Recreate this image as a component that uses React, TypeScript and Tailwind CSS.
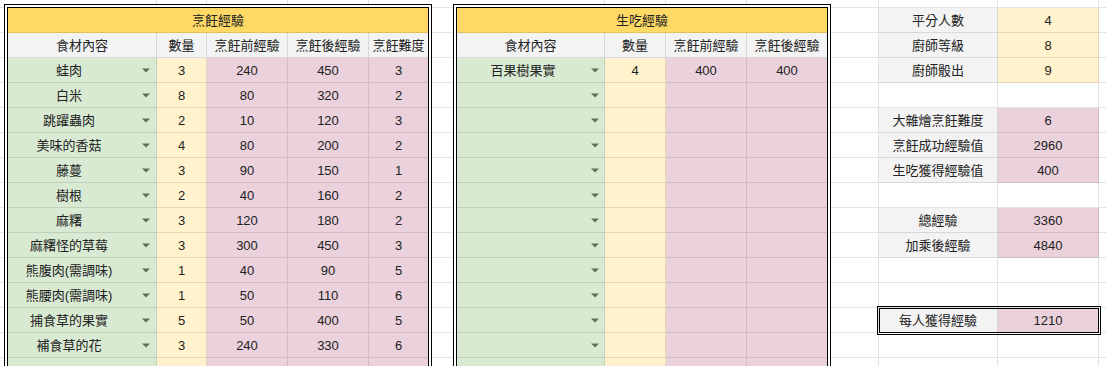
import React from "react";

const LINE = "border-black/[0.11]";

const GREEN = "bg-[#d9ead3]";
const YELLOW = "bg-[#fff2cc]";
const PINK = "bg-[#ead1dc]";
const HEAD = "bg-[#f3f3f3]";

const T1W = ["w-[149px]", "w-[50px]", "w-[81px]", "w-[81px]", "w-[59px]"];
const T1BG = [GREEN, YELLOW, PINK, PINK, PINK];
const T2W = ["w-[148px]", "w-[61px]", "w-[81px]", "w-[80px]"];
const T2BG = [GREEN, YELLOW, PINK, PINK];

const data1: string[][] = [
  ["蛙肉", "3", "240", "450", "3"],
  ["白米", "8", "80", "320", "2"],
  ["跳躍蟲肉", "2", "10", "120", "3"],
  ["美味的香菇", "4", "80", "200", "2"],
  ["藤蔓", "3", "90", "150", "1"],
  ["樹根", "2", "40", "160", "2"],
  ["麻糬", "3", "120", "180", "2"],
  ["麻糬怪的草莓", "3", "300", "450", "3"],
  ["熊腹肉(需調味)", "1", "40", "90", "5"],
  ["熊腰肉(需調味)", "1", "50", "110", "6"],
  ["捕食草的果實", "5", "50", "400", "5"],
  ["補食草的花", "3", "240", "330", "6"],
  ["", "", "", "", ""],
];

const data2: string[][] = [
  ["百果樹果實", "4", "400", "400"],
  ...Array.from({ length: 12 }, () => ["", "", "", ""]),
];

function Arrow() {
  return (
    <svg width="8" height="5" viewBox="0 0 8 5" className="shrink-0">
      <path d="M0 0.5h8L4 4.5z" fill="#58744f" />
    </svg>
  );
}

function TopStrip({ widths }: { widths: string[] }) {
  return (
    <div className="flex h-[4px] shrink-0 pl-[4px]">
      {widths.map((w, i) => (
        <div
          key={i}
          className={`${i < widths.length - 1 ? w + " border-r" : "flex-1"} ${LINE}`}
        />
      ))}
    </div>
  );
}

function Table({
  title,
  headers,
  widths,
  bgs,
  rows,
  boxW,
  textPad,
  arrowMr,
}: {
  title: string;
  headers: string[];
  widths: string[];
  bgs: string[];
  rows: string[][];
  boxW: string;
  textPad: string;
  arrowMr: string;
}) {
  const last = widths.length - 1;
  return (
    <div className={`${boxW} shrink-0 flex flex-col`}>
      <TopStrip widths={widths} />
      <div className="flex flex-col border-4 border-double border-black border-b-0 flex-1">
        <div className={`h-[25px] shrink-0 bg-[#ffd966] border-b ${LINE} flex items-center justify-center leading-[15px]`}>
          {title}
        </div>
        <div className="flex h-[25px] shrink-0">
          {headers.map((h, i) => (
            <div
              key={i}
              className={`${widths[i]} ${HEAD} border-b ${i < last ? "border-r" : ""} ${LINE} flex items-center justify-center leading-[15px]`}
            >
              {h}
            </div>
          ))}
        </div>
        {rows.map((r, ri) => (
          <div key={ri} className="flex h-[25px] shrink-0">
            {r.map((v, i) =>
              i === 0 ? (
                <div
                  key={i}
                  className={`${widths[i]} ${bgs[i]} border-b border-r ${LINE} flex items-center leading-[15px]`}
                >
                  <span className={`flex-1 text-center whitespace-nowrap ${textPad}`}>{v}</span>
                  <span className={arrowMr}>
                    <Arrow />
                  </span>
                </div>
              ) : (
                <div
                  key={i}
                  className={`${widths[i]} ${bgs[i]} border-b ${i < last ? "border-r" : ""} ${LINE} flex items-center justify-center leading-[15px]`}
                >
                  {v}
                </div>
              )
            )}
          </div>
        ))}
      </div>
    </div>
  );
}

function Gap({ w, right }: { w: string; right?: boolean }) {
  return (
    <div className={`${w} shrink-0 flex flex-col ${right ? "border-r" : ""} ${LINE}`}>
      <div className={`h-[8px] shrink-0 border-b ${LINE}`} />
      {Array.from({ length: 15 }).map((_, i) => (
        <div key={i} className={`h-[25px] shrink-0 border-b ${LINE}`} />
      ))}
    </div>
  );
}

type PanelRow = { label?: string; value?: string; tone?: "yellow" | "pink"; boxed?: boolean };

const panel: PanelRow[] = [
  { label: "平分人數", value: "4", tone: "yellow" },
  { label: "廚師等級", value: "8", tone: "yellow" },
  { label: "廚師骰出", value: "9", tone: "yellow" },
  {},
  { label: "大雜燴烹飪難度", value: "6", tone: "pink" },
  { label: "烹飪成功經驗值", value: "2960", tone: "pink" },
  { label: "生吃獲得經驗值", value: "400", tone: "pink" },
  {},
  { label: "總經驗", value: "3360", tone: "pink" },
  { label: "加乘後經驗", value: "4840", tone: "pink" },
  {},
  {},
  { label: "每人獲得經驗", value: "1210", tone: "pink", boxed: true },
  {},
  {},
];

function Panel() {
  return (
    <div className="flex-1 flex flex-col">
      <div className="flex h-[8px] shrink-0">
        <div className={`w-[119px] border-r border-b ${LINE}`} />
        <div className={`w-[101px] border-r border-b ${LINE}`} />
        <div className={`flex-1 border-b ${LINE}`} />
      </div>
      {panel.map((r, i) => {
        const labelBg = r.label ? HEAD : "bg-white";
        const valueBg = r.tone === "yellow" ? YELLOW : r.tone === "pink" ? PINK : "bg-white";
        const pair = (
          <>
            <div className={`w-[119px] ${labelBg} border-r border-b ${LINE} flex items-center justify-center leading-[15px] whitespace-nowrap`}>
              {r.label}
            </div>
            <div className={`w-[101px] ${valueBg} border-r border-b ${LINE} flex items-center justify-center leading-[15px]`}>
              {r.value}
            </div>
          </>
        );
        return (
          <div key={i} className="flex h-[25px] shrink-0">
            {r.boxed ? (
              <div className="flex relative z-10 outline-[3px] outline-double outline-black outline-offset-[-1px]">
                {pair}
              </div>
            ) : (
              pair
            )}
            <div className={`flex-1 border-b ${LINE}`} />
          </div>
        );
      })}
    </div>
  );
}

export default function App() {
  return (
    <div className="flex h-[366px] w-[1106px] overflow-hidden bg-white text-[13px] text-[#222] font-['Liberation_Sans','Noto_Sans_CJK_TC',sans-serif]">
      <Gap w="w-[4px]" />
      <Table
        title="烹飪經驗"
        headers={["食材內容", "數量", "烹飪前經驗", "烹飪後經驗", "烹飪難度"]}
        widths={T1W}
        bgs={T1BG}
        rows={data1}
        boxW="w-[428px]"
        textPad="pr-[12px]"
        arrowMr="mr-[6px] flex"
      />
      <Gap w="w-[21px]" />
      <Table
        title="生吃經驗"
        headers={["食材內容", "數量", "烹飪前經驗", "烹飪後經驗"]}
        widths={T2W}
        bgs={T2BG}
        rows={data2}
        boxW="w-[378px]"
        textPad="pr-[2px]"
        arrowMr="mr-[5px] flex"
      />
      <Gap w="w-[48px]" right />
      <Panel />
    </div>
  );
}
